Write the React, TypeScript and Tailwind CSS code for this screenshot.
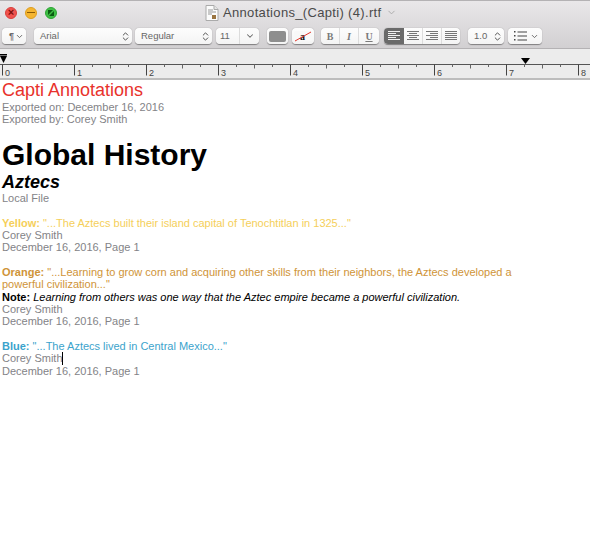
import { ChevronDown, ChevronsUpDown } from 'lucide-react';

const rulerNumbers = [0, 1, 2, 3, 4, 5, 6, 7, 8];
const ticks = Array.from({ length: 33 }, (_, i) => i);

function Ruler() {
  return (
    <div className="h-[31px] bg-[#ececec] border-b-2 border-[#bdbdbd]">
      <svg width="590" height="29" viewBox="0 0 590 29">
        <line x1="0" y1="15.5" x2="590" y2="15.5" stroke="#555" />
        {ticks.map((i) => {
          const x = 2.5 + i * 18;
          const h = i % 4 === 0 ? 11 : i % 2 === 0 ? 4 : 2.5;
          return <line key={i} x1={x} y1="15.5" x2={x} y2={15.5 + h} stroke={i % 4 === 0 ? '#444' : '#666'} />;
        })}
        {rulerNumbers.map((n) => (
          <text key={n} x={5 + n * 72} y="27" fontSize="9" fill="#444" fontFamily="Liberation Sans, sans-serif">
            {n}
          </text>
        ))}
        <rect x="0" y="5" width="7" height="1.5" fill="#000" />
        <polygon points="0,7 7,7 3.5,14" fill="#000" />
        <polygon points="521,9 530,9 525.5,15" fill="#000" />
      </svg>
    </div>
  );
}

function Segment({ children, className = '' }: { children?: React.ReactNode; className?: string }) {
  return (
    <div className={`h-[16px] rounded-[4px] bg-gradient-to-b from-[#fdfdfd] to-[#f4f4f4] shadow-[0_0.5px_1px_rgba(0,0,0,0.4)] flex items-center text-[9.5px] text-[#666] overflow-hidden shrink-0 ${className}`}>
      {children}
    </div>
  );
}

function AlignIcon({ kind, color }: { kind: string; color: string }) {
  const rows = [0, 1, 2, 3, 4];
  return (
    <svg width="12" height="10" viewBox="0 0 12 10">
      {rows.map((r) => {
        const short = r % 2 === 1;
        const w = kind === 'justify' || !short ? 12 : 8;
        const x = kind === 'left' ? 0 : kind === 'center' ? (12 - w) / 2 : 12 - w;
        return <rect key={r} x={x} y={r * 2} width={w} height="1" fill={color} />;
      })}
    </svg>
  );
}

function Toolbar() {
  return (
    <div className="h-[24px] pl-[2px] flex items-start pt-[4px] text-[#666]">
      <Segment className="w-[24px] pl-[7px] gap-[1px]">
        <span className="font-bold text-[9px] leading-none">¶</span>
        <ChevronDown size={9} strokeWidth={2.5} />
      </Segment>
      <Segment className="w-[98px] ml-[8px] pl-[6px] justify-between pr-[1px]">
        <span>Arial</span>
        <ChevronsUpDown size={11} strokeWidth={2} className="text-[#444]" />
      </Segment>
      <Segment className="w-[77px] ml-[3px] pl-[6px] justify-between pr-[1px]">
        <span>Regular</span>
        <ChevronsUpDown size={11} strokeWidth={2} className="text-[#444]" />
      </Segment>
      <Segment className="w-[43px] ml-[4px]">
        <span className="w-[24px] pl-[4px] border-r border-[#dcdcdc] h-full flex items-center">11</span>
        <span className="flex-1 flex justify-center">
          <ChevronDown size={10} strokeWidth={2.5} />
        </span>
      </Segment>
      <Segment className="w-[21px] ml-[8px] justify-center">
        <span className="w-[17px] h-[11px] rounded-[2px] bg-[#8e8e8e]" />
      </Segment>
      <Segment className="w-[22px] ml-[4px] justify-center">
        <svg width="18" height="12" viewBox="0 0 18 12">
          <rect x="0" y="1" width="18" height="10" rx="1.5" fill="#f8f8f8" />
          <text x="6" y="10" fontSize="10" fontWeight="bold" fill="#111" fontFamily="Liberation Serif, serif">
            a
          </text>
          <line x1="1" y1="11" x2="17" y2="2" stroke="#e0352b" strokeWidth="1" />
        </svg>
      </Segment>
      <Segment className="w-[58px] ml-[7px] font-['Liberation_Serif',serif] font-bold text-[10px] !text-[#7a7a7a]">
        <span className="w-[19px] h-full flex items-center justify-center border-r border-[#dcdcdc]">B</span>
        <span className="w-[19px] h-full flex items-center justify-center border-r border-[#dcdcdc] italic">I</span>
        <span className="flex-1 flex items-center justify-center underline">U</span>
      </Segment>
      <Segment className="w-[76px] ml-[5px]">
        <span className="w-[20px] h-full flex items-center justify-center bg-[#6a6a6a]">
          <AlignIcon kind="left" color="#f2f2f2" />
        </span>
        <span className="w-[19px] h-full flex items-center justify-center border-r border-[#dcdcdc]">
          <AlignIcon kind="center" color="#777" />
        </span>
        <span className="w-[19px] h-full flex items-center justify-center border-r border-[#dcdcdc]">
          <AlignIcon kind="right" color="#777" />
        </span>
        <span className="flex-1 flex items-center justify-center">
          <AlignIcon kind="justify" color="#777" />
        </span>
      </Segment>
      <Segment className="w-[36px] ml-[8px] pl-[6px] justify-between pr-[1px]">
        <span>1.0</span>
        <ChevronsUpDown size={11} strokeWidth={2} className="text-[#444]" />
      </Segment>
      <Segment className="w-[34px] ml-[4px] pl-[6px] gap-[3px]">
        <svg width="13" height="10" viewBox="0 0 13 10">
          {[1, 5, 9].map((y) => (
            <g key={y}>
              <rect x="0" y={y - 1} width="1.5" height="1.5" fill="#444" />
              <rect x="3.5" y={y - 0.5} width="9.5" height="1" fill="#444" />
            </g>
          ))}
        </svg>
        <ChevronDown size={9} strokeWidth={2.5} />
      </Segment>
    </div>
  );
}

function TitleBar() {
  return (
    <div className="h-[23px] flex items-center">
      <div className="flex items-center gap-[8px] pl-[5px]">
        <span className="w-[12px] h-[12px] rounded-full bg-[#f0524f] border border-[#d9403c] flex items-center justify-center text-[#7d0f0b] text-[11px] leading-none font-bold">×</span>
        <span className="w-[12px] h-[12px] rounded-full bg-[#f5b530] border border-[#dd9e20] flex items-center justify-center">
          <span className="w-[8px] h-[1.5px] bg-[#8a5a05]" />
        </span>
        <span className="w-[12px] h-[12px] rounded-full bg-[#3fbf45] border border-[#2ea535] flex items-center justify-center">
          <svg width="8" height="8" viewBox="0 0 8 8">
            <polygon points="1,1 6,1 1,6" fill="#0b5a12" />
            <polygon points="7,7 2,7 7,2" fill="#0b5a12" />
          </svg>
        </span>
      </div>
      <svg width="14" height="16" viewBox="0 0 14 16" className="ml-[148px]">
        <path d="M1 .5h8l4 4v11H1z" fill="#fbfbfb" stroke="#aaa" />
        <path d="M9 .5v4h4" fill="#e6e6e6" stroke="#aaa" />
        <path d="M3 5h5M3 7h8M3 9h4" stroke="#999" />
        <rect x="7" y="10" width="4" height="4" fill="#9a7440" />
      </svg>
      <span className="ml-[4px] text-[13px] tracking-[0.33px] text-[#4a4a4a]">Annotations_(Capti) (4).rtf</span>
      <ChevronDown size={11} strokeWidth={2} className="ml-[5px] text-[#a8a8a8]" />
    </div>
  );
}

function Meta({ children }: { children: React.ReactNode }) {
  return <div className="text-[#838387]">{children}</div>;
}

function Annotation({
  label,
  quote,
  color,
  note,
  caret,
}: {
  label: string;
  quote: React.ReactNode;
  color: string;
  note?: string;
  caret?: boolean;
}) {
  return (
    <div className="mt-[12.5px]">
      <div className={color}>
        <b>{label}</b> {quote}
      </div>
      {note && (
        <div className="text-black">
          <b>Note:</b> <i>{note}</i>
        </div>
      )}
      <Meta>
        Corey Smith
        {caret && <span className="inline-block w-px h-[13px] -ml-px bg-black align-[-3px]" />}
      </Meta>
      <Meta>December 16, 2016, Page 1</Meta>
    </div>
  );
}

export default function App() {
  return (
    <div className="w-[590px] h-[542px] bg-white overflow-hidden font-['Liberation_Sans',Arial,sans-serif]">
      <div className="border-t border-[#4b4b4d] bg-gradient-to-b from-[#e9e7e9] to-[#d2d0d2] border-b border-[#b4b2b4]">
        <TitleBar />
        <Toolbar />
      </div>
      <Ruler />
      <div className="pl-[2px] text-[11px] leading-[12.25px]">
        <div className="text-[18px] leading-[21px] text-[#e8322c]">Capti Annotations</div>
        <Meta>Exported on: December 16, 2016</Meta>
        <Meta>Exported by: Corey Smith</Meta>
        <div className="mt-[12.5px] text-[30px] leading-[34px] font-bold text-black">Global History</div>
        <div className="text-[18px] leading-[20px] font-bold italic text-black">Aztecs</div>
        <Meta>Local File</Meta>
        <Annotation
          label="Yellow:"
          color="text-[#f5cf5a]"
          quote={'"...The Aztecs built their island capital of Tenochtitlan in 1325..."'}
        />
        <Annotation
          label="Orange:"
          color="text-[#cf9438]"
          quote={
            <>
              "...Learning to grow corn and acquiring other skills from their neighbors, the Aztecs developed a
              <br />
              powerful civilization..."
            </>
          }
          note="Learning from others was one way that the Aztec empire became a powerful civilization."
        />
        <Annotation
          label="Blue:"
          color="text-[#3ba3cc]"
          quote={'"...The Aztecs lived in Central Mexico..."'}
          caret
        />
      </div>
    </div>
  );
}
